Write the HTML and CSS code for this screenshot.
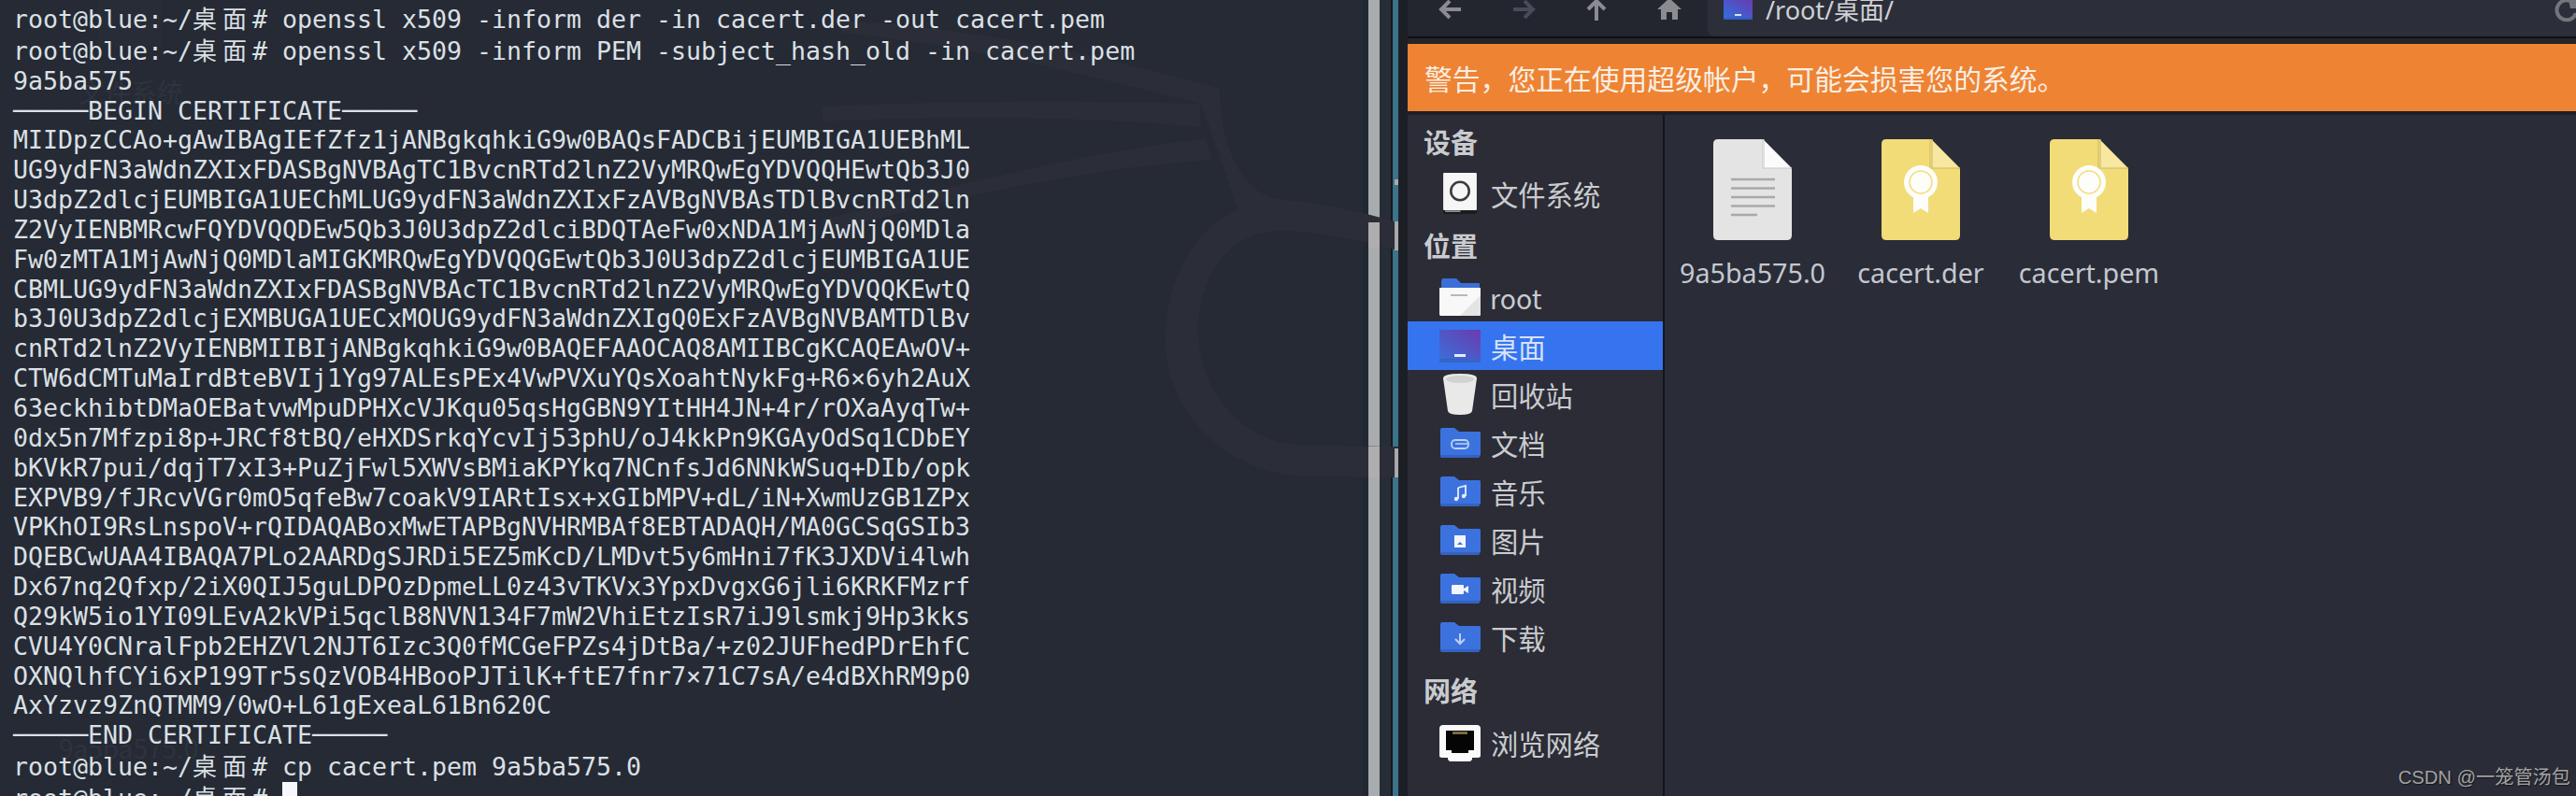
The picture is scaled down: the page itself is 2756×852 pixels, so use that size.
FILE: index.html
```html
<!DOCTYPE html>
<html lang="zh-CN">
<head>
<meta charset="utf-8">
<title>Terminal and file manager</title>
<link rel="stylesheet" href="styles.css">
</head>
<body>
<div class="screen">
  <section class="terminal">
    <pre class="term-text"><span class="line">root@blue:~/<span class="cjk">桌面</span># openssl x509 -inform der -in cacert.der -out cacert.pem</span>
<span class="line">root@blue:~/<span class="cjk">桌面</span># openssl x509 -inform PEM -subject_hash_old -in cacert.pem</span>
<span class="line">9a5ba575</span>
<span class="line">─────BEGIN CERTIFICATE─────</span>
<span class="line">MIIDpzCCAo+gAwIBAgIEfZfz1jANBgkqhkiG9w0BAQsFADCBijEUMBIGA1UEBhML</span>
<span class="line">UG9ydFN3aWdnZXIxFDASBgNVBAgTC1BvcnRTd2lnZ2VyMRQwEgYDVQQHEwtQb3J0</span>
<span class="line">U3dpZ2dlcjEUMBIGA1UEChMLUG9ydFN3aWdnZXIxFzAVBgNVBAsTDlBvcnRTd2ln</span>
<span class="line">Z2VyIENBMRcwFQYDVQQDEw5Qb3J0U3dpZ2dlciBDQTAeFw0xNDA1MjAwNjQ0MDla</span>
<span class="line">Fw0zMTA1MjAwNjQ0MDlaMIGKMRQwEgYDVQQGEwtQb3J0U3dpZ2dlcjEUMBIGA1UE</span>
<span class="line">CBMLUG9ydFN3aWdnZXIxFDASBgNVBAcTC1BvcnRTd2lnZ2VyMRQwEgYDVQQKEwtQ</span>
<span class="line">b3J0U3dpZ2dlcjEXMBUGA1UECxMOUG9ydFN3aWdnZXIgQ0ExFzAVBgNVBAMTDlBv</span>
<span class="line">cnRTd2lnZ2VyIENBMIIBIjANBgkqhkiG9w0BAQEFAAOCAQ8AMIIBCgKCAQEAwOV+</span>
<span class="line">CTW6dCMTuMaIrdBteBVIj1Yg97ALEsPEx4VwPVXuYQsXoahtNykFg+R6×6yh2AuX</span>
<span class="line">63eckhibtDMaOEBatvwMpuDPHXcVJKqu05qsHgGBN9YItHH4JN+4r/rOXaAyqTw+</span>
<span class="line">0dx5n7Mfzpi8p+JRCf8tBQ/eHXDSrkqYcvIj53phU/oJ4kkPn9KGAyOdSq1CDbEY</span>
<span class="line">bKVkR7pui/dqjT7xI3+PuZjFwl5XWVsBMiaKPYkq7NCnfsJd6NNkWSuq+DIb/opk</span>
<span class="line">EXPVB9/fJRcvVGr0mO5qfeBw7coakV9IARtIsx+xGIbMPV+dL/iN+XwmUzGB1ZPx</span>
<span class="line">VPKhOI9RsLnspoV+rQIDAQABoxMwETAPBgNVHRMBAf8EBTADAQH/MA0GCSqGSIb3</span>
<span class="line">DQEBCwUAA4IBAQA7PLo2AARDgSJRDi5EZ5mKcD/LMDvt5y6mHni7fK3JXDVi4lwh</span>
<span class="line">Dx67nq2Qfxp/2iX0QIJ5guLDPOzDpmeLL0z43vTKVx3YpxDvgxG6jli6KRKFMzrf</span>
<span class="line">Q29kW5io1YI09LEvA2kVPi5qclB8NVN134F7mW2VhiEtzIsR7iJ9lsmkj9Hp3kks</span>
<span class="line">CVU4Y0CNralFpb2EHZVl2NJT6Izc3Q0fMCGeFPZs4jDtBa/+z02JUFhedPDrEhfC</span>
<span class="line">OXNQlhfCYi6xP199Tr5sQzVOB4HBooPJTilK+ftE7fnr7×71C7sA/e4dBXhRM9p0</span>
<span class="line">AxYzvz9ZnQTMM9/0wO+L61gExeaL61Bn620C</span>
<span class="line">─────END CERTIFICATE─────</span>
<span class="line">root@blue:~/<span class="cjk">桌面</span># cp cacert.pem 9a5ba575.0</span>
<span class="line">root@blue:~/<span class="cjk">桌面</span># <span class="cursor"></span></span></pre>
  </section>

  <div class="scroll-track"><div class="scroll-thumb"></div></div>
  <div class="window-edge"></div>

  <svg class="wallpaper" viewBox="0 0 1496 852" aria-hidden="true">
    <path class="wp-band" d="M900 22C1050 30 1180 60 1305 95C1305 150 1325 205 1367 213C1420 218 1460 228 1496 238V268C1450 255 1400 247 1367 247C1310 250 1282 300 1282 353C1282 420 1330 477 1400 477L1496 478V511L1400 510C1310 508 1247 440 1247 364C1247 290 1285 240 1325 225L1285 111C1180 85 1050 50 900 35Z"/>
    <path class="wp-band" d="M880 114C1000 108 1150 108 1284 111L1285 136C1150 124 1000 124 880 130Z"/>
    <path class="wp-band" d="M880 235C1020 200 1170 160 1290 149L1297 171C1170 180 1040 205 880 250Z"/>
    <path class="wp-ghost" d="M105 0H173V50H105ZM115 703L140 690L165 720V750H115ZM108 450H150V520H108Z"/>
    <path class="wp-thumb" d="M1464 238H1476V266H1464ZM1464 478H1476V511H1464Z"/>
    <path class="wp-strip" d="M1492 237H1496V268H1492ZM1492 480H1496V511H1492ZM1492 192H1496V198H1492Z"/>
  </svg>
  <div class="desk-label desk-label-a">文件系统</div>
  <div class="desk-label desk-label-b">9a5ba575.0</div>

  <section class="files">
    <header class="toolbar">
      <div class="nav">
        <svg class="nav-icon" viewBox="0 0 28 28"><path class="arrow arrow-on" d="M25 12H5M13 3L4 12L13 21"/></svg>
        <svg class="nav-icon" viewBox="0 0 28 28"><path class="arrow arrow-off" d="M3 12H23M15 3L24 12L15 21"/></svg>
        <svg class="nav-icon" viewBox="0 0 28 28"><path class="arrow arrow-on" d="M14 24V4M5 12L14 3L23 12"/></svg>
        <svg class="nav-icon" viewBox="0 0 28 28"><path class="home" d="M14 0L27 12H23V23H17V15H11V23H5V12H1Z"/></svg>
      </div>
      <div class="path-bar">
        <svg class="path-icon" viewBox="0 0 31 21"><defs><linearGradient id="desk" x1="0" y1="1" x2="1" y2="0"><stop offset="0" stop-color="#2f6fe0"/><stop offset="1" stop-color="#6a3bb0"/></linearGradient></defs><path d="M0 0H31V19H0Z" fill="url(#desk)"/><path d="M0 19H31V21H0Z" fill="#2d5fc0"/><path d="M12 15H19V17H12Z" fill="#d8e2f5"/></svg>
        <span class="path-text">/root/桌面/</span>
        <svg class="reload" viewBox="0 0 28 24"><path class="reload-arc" d="M22 4A10.500 10.500 0 1 0 24 14"/><path class="reload-head" d="M16 0H28V9H18Z"/></svg>
      </div>
    </header>
    <div class="toolbar-gap"></div>
    <div class="warning">警告，您正在使用超级帐户，可能会损害您的系统。</div>
    <div class="panes">
      <aside class="sidebar">
        <h3 class="side-head">设备</h3>
        <div class="side-row">
          <span class="side-icon"><svg class="icon-disk" viewBox="0 0 35 43"><rect x="0" y="0" width="35" height="39" rx="1" fill="#f6f6f6"/><circle cx="17.500" cy="19" r="9.500" fill="none" stroke="#3b3b3f" stroke-width="2.500"/><path d="M0 39H35V42L33 43H2L0 42Z" fill="#1b1b1d"/><path d="M2 39.500H18V41H2Z" fill="#9a9a9a"/></svg></span>
          <span>文件系统</span>
        </div>
        <h3 class="side-head second">位置</h3>
        <div class="side-row">
          <span class="side-icon"><svg class="icon-folder" viewBox="0 0 44 40"><path d="M2 3Q2 0 5 0H18L23 5H43V15H2Z" fill="#3a6fd8"/><path d="M0 10H44V39L43 40H1L0 39Z" fill="#f8f8f8"/><path d="M12 17H30V19H12Z" fill="#b8b8b8"/><path d="M22 40L44 18V39L43 40Z" fill="#e4e4e4"/></svg></span>
          <span class="latin">root</span>
        </div>
        <div class="side-row selected">
          <span class="side-icon"><svg class="icon-folder" viewBox="0 0 44 35"><defs><linearGradient id="desk2" x1="0" y1="1" x2="1" y2="0"><stop offset="0" stop-color="#3a6fd8"/><stop offset="1" stop-color="#6b3bb0"/></linearGradient></defs><path d="M0 0H44V31H0Z" fill="url(#desk2)"/><path d="M0 31H44V35H0Z" fill="#3464c4"/><path d="M16 26H28V29H16Z" fill="#e6ecf8"/></svg></span>
          <span>桌面</span>
        </div>
        <div class="side-row">
          <span class="side-icon"><svg class="icon-disk" viewBox="0 0 36 44"><path d="M0 5Q0 0 18 0T36 5L31 40Q30 44 18 44T5 40Z" fill="#e9e9e9"/><ellipse cx="18" cy="6" rx="15" ry="4" fill="#d2d2d2"/></svg></span>
          <span>回收站</span>
        </div>
        <div class="side-row">
          <span class="side-icon"><svg class="icon-folder" viewBox="0 0 44 32"><use href="#blue-folder"/><rect x="13" y="13" width="18" height="9" rx="4" fill="none" stroke="#bcd0f5" stroke-width="1.800"/><path d="M17 17H30" stroke="#bcd0f5" stroke-width="1.500"/></svg></span>
          <span>文档</span>
        </div>
        <div class="side-row">
          <span class="side-icon"><svg class="icon-folder" viewBox="0 0 44 32"><use href="#blue-folder"/><path d="M20 12L28 10V21M20 12V24" fill="none" stroke="#e6eefc" stroke-width="1.800"/><circle cx="18" cy="24" r="2.200" fill="#e6eefc"/><circle cx="26" cy="21" r="2.200" fill="#e6eefc"/></svg></span>
          <span>音乐</span>
        </div>
        <div class="side-row">
          <span class="side-icon"><svg class="icon-folder" viewBox="0 0 44 32"><use href="#blue-folder"/><rect x="16" y="11" width="12" height="13" fill="#f2f5fc"/><path d="M19 21L22 18L25 21Z" fill="#3a6fd8"/></svg></span>
          <span>图片</span>
        </div>
        <div class="side-row">
          <span class="side-icon"><svg class="icon-folder" viewBox="0 0 44 32"><use href="#blue-folder"/><rect x="13" y="12" width="13" height="10" rx="1" fill="#f2f5fc"/><path d="M26 16L31 13V21L26 18Z" fill="#f2f5fc"/></svg></span>
          <span>视频</span>
        </div>
        <div class="side-row">
          <span class="side-icon"><svg class="icon-folder" viewBox="0 0 44 32"><use href="#blue-folder"/><path d="M22 12V22M17 18L22 23L27 18" fill="none" stroke="#bcd0f5" stroke-width="2"/></svg></span>
          <span>下载</span>
        </div>
        <h3 class="side-head last">网络</h3>
        <div class="side-row">
          <span class="side-icon"><svg class="icon-folder" viewBox="0 0 44 39"><path d="M4 0H40Q44 0 44 4V33Q44 35 40 35H35V37L33 39H11L9 37V35H4Q0 35 0 33V4Q0 0 4 0Z" fill="#fafafa"/><path d="M7 6H37V27H31V30H13V27H7Z" fill="#050505"/><path d="M14 7H30V10H14Z" fill="#7a6c3c"/></svg></span>
          <span>浏览网络</span>
        </div>
      </aside>
      <main class="file-grid">
        <figure class="file">
          <svg class="file-icon" viewBox="0 0 84 108"><path d="M5 0H53L84 32V103Q84 108 79 108H5Q0 108 0 103V5Q0 0 5 0Z" fill="#e4e4e4"/><path d="M53 0L84 31H57Q53 31 53 27Z" fill="#fbfbfb"/><path d="M52 0H55V30H84V32H52Z" fill="#cfcfcf" opacity=".6"/><path class="doc-line" d="M19 43H66M19 52.500H66M19 62H66M19 71.500H66M19 81H47"/></svg>
          <figcaption>9a5ba575.0</figcaption>
        </figure>
        <figure class="file">
          <svg class="file-icon" viewBox="0 0 84 108"><use href="#cert"/></svg>
          <figcaption>cacert.der</figcaption>
        </figure>
        <figure class="file">
          <svg class="file-icon" viewBox="0 0 84 108"><use href="#cert"/></svg>
          <figcaption>cacert.pem</figcaption>
        </figure>
      </main>
    </div>
    <div class="credit">CSDN @一笼管汤包</div>
  </section>
</div>
<svg class="defs" aria-hidden="true">
  <defs>
    <g id="blue-folder"><path d="M1 2Q1 0 3 0H16L21 4H43Q44 4 44 6V29L43 30H1Z" fill="#3c72de"/><path d="M1 29H43V31L42 32H2L1 31Z" fill="#3462c0"/></g>
    <g id="cert"><path d="M5 0H53L84 32V103Q84 108 79 108H5Q0 108 0 103V5Q0 0 5 0Z" fill="#f2dc78"/><path d="M53 0L84 31H57Q53 31 53 27Z" fill="#f7e7a0"/><path d="M51 0H55V30H84V32H51Z" fill="#d8c46a" opacity=".7"/><path d="M34 57L34 79L42 74L50 79L50 57Z" fill="#fdfdfa"/><circle cx="42" cy="46" r="18" fill="#fdfdfa"/><circle cx="42" cy="46" r="12" fill="#fdfdfa" stroke="#f2dc78" stroke-width="1.500"/></g>
  </defs>
</svg>
</body>
</html>
```

FILE: styles.css
```css
html, body {
  margin: 0;
  padding: 0;
  background: #252a35;
}

.screen {
  position: relative;
  display: flex;
  width: 2756px;
  height: 852px;
  overflow: hidden;
  background: #252a35;
}

.terminal {
  width: 1458px;
  height: 852px;
  flex: none;
}

.wallpaper {
  position: absolute;
  left: 0;
  top: 0;
  width: 1496px;
  height: 852px;
  z-index: 0;
}

.wp-band {
  fill: #2b2e38;
}

.wp-ghost {
  fill: #272c37;
}

.wp-thumb {
  fill: #b0adae;
}

.wp-strip {
  fill: #a9a9ab;
}

.desk-label {
  position: absolute;
  z-index: 0;
  font-family: "Noto Sans CJK SC", "Noto Sans", sans-serif;
  font-size: 28px;
  line-height: 32px;
  color: #2e333e;
}

.desk-label-a {
  left: 84px;
  top: 82px;
}

.desk-label-b {
  left: 63px;
  top: 784px;
}

.term-text {
  position: relative;
  z-index: 1;
  margin: 0;
  padding: 3px 0 0 14px;
  font-family: "DejaVu Sans Mono", "Noto Sans CJK SC", monospace;
  font-size: 26.580px;
  line-height: 31.850px;
  color: #dbe0e4;
}

.line {
  display: inline-block;
  height: 31.850px;
}

.cjk {
  font-family: "Noto Sans CJK SC", sans-serif;
  font-size: 26px;
  letter-spacing: 6px;
}

.cursor {
  display: inline-block;
  width: 16px;
  height: 30px;
  background: #f5f7fa;
  vertical-align: top;
}

.scroll-track {
  flex: none;
  width: 32px;
  height: 852px;
  display: flex;
  background: #262d36;
  box-shadow: inset 6px 0 0 #222833;
}

.scroll-thumb {
  width: 12px;
  height: 852px;
  margin-left: 6px;
  background: #a8acae;
}

.window-edge {
  flex: none;
  width: 6px;
  height: 852px;
  background: #3b7488;
  box-shadow: -2px 0 0 #14181f;
}

.files {
  position: relative;
  z-index: 2;
  flex: none;
  width: 1260px;
  height: 852px;
  padding-left: 10px;
  background: #1d1f27;
  font-family: "Noto Sans CJK SC", "Noto Sans", sans-serif;
  color: #c9cbce;
}

.toolbar {
  display: flex;
  height: 39px;
  background: #23252f;
}

.nav {
  display: flex;
  gap: 50px;
  width: 321px;
  margin-top: -2px;
  padding-left: 32px;
  box-sizing: border-box;
  flex: none;
}

.nav-icon {
  width: 28px;
  height: 28px;
  flex: none;
}

.arrow {
  fill: none;
  stroke-width: 4;
}

.arrow-on {
  stroke: #8a8c92;
}

.arrow-off {
  stroke: #484b59;
}

.home {
  fill: #8a8c92;
}

.path-bar {
  flex: 1;
  display: flex;
  align-items: flex-start;
  background: #2c2f39;
  border-radius: 0 0 0 8px;
  padding-left: 17px;
  position: relative;
}

.path-icon {
  width: 31px;
  height: 21px;
  flex: none;
}

.path-text {
  margin-top: -2px;
  margin-left: 14px;
  font-family: "Noto Sans", "Noto Sans CJK SC", sans-serif;
  font-size: 27px;
  line-height: 26px;
  color: #cfd1d4;
}

.reload {
  position: absolute;
  right: 6px;
  top: 0;
  width: 28px;
  height: 24px;
}

.reload-arc {
  fill: none;
  stroke: #74767d;
  stroke-width: 4;
}

.reload-head {
  fill: #74767d;
}

.toolbar-gap {
  height: 8px;
  background: #262428;
  border-top: 2px solid #0e0f17;
  box-sizing: border-box;
}

.warning {
  height: 72px;
  display: flex;
  align-items: center;
  padding-left: 18px;
  background: #ee8333;
  color: #f8efe4;
  font-size: 29.800px;
  line-height: 72px;
}

.panes {
  display: flex;
  height: 733px;
  margin-top: 4px;
  background: #2a2c37;
}

.sidebar {
  flex: none;
  width: 273px;
  background: #2b2c36;
  border-right: 2px solid #14151b;
}

.side-head {
  display: flex;
  align-items: center;
  box-sizing: border-box;
  height: 58px;
  margin: 0;
  padding: 0 0 2px 17px;
  font-size: 29px;
  font-weight: 700;
  color: #c9cbce;
}

.side-head.second {
  margin-top: 1px;
}

.side-head.last {
  margin-top: 3px;
  padding-bottom: 4px;
}

.side-row {
  display: flex;
  align-items: center;
  height: 52px;
  font-size: 29.300px;
  font-family: "Noto Sans CJK SC", "Noto Sans", sans-serif;
}

.side-row .latin {
  margin-left: -1px;
  font-size: 28.500px;
}

.side-row.selected {
  background: #3674ef;
  color: #d7e2f7;
}

.side-icon {
  display: flex;
  align-items: center;
  justify-content: center;
  flex: none;
  width: 44px;
  margin: 0 11px 0 34px;
}

.icon-disk {
  width: 36px;
  height: 44px;
}

.icon-folder {
  width: 44px;
  height: auto;
}

.file-grid {
  flex: 1;
  display: grid;
  grid-template-columns: repeat(3, 180px);
  align-content: start;
  padding: 26px 0 0 4px;
}

.file {
  display: flex;
  flex-direction: column;
  align-items: center;
  margin: 0;
}

.file-icon {
  width: 84px;
  height: 108px;
}

.doc-line {
  fill: none;
  stroke: #a9a9a9;
  stroke-width: 2.500;
}

.file figcaption {
  margin-top: 15px;
  font-family: "Noto Sans", sans-serif;
  font-size: 28.700px;
  line-height: 40px;
  color: #c3c8d0;
  white-space: nowrap;
}

.credit {
  position: absolute;
  right: 16px;
  bottom: 6px;
  font-family: "Liberation Sans", "Noto Sans CJK SC", sans-serif;
  font-size: 20.200px;
  line-height: 28px;
  color: #a2a2a2;
  text-shadow: 1px 1px 1px #16171c;
}

.defs {
  position: absolute;
  width: 0;
  height: 0;
}
```
